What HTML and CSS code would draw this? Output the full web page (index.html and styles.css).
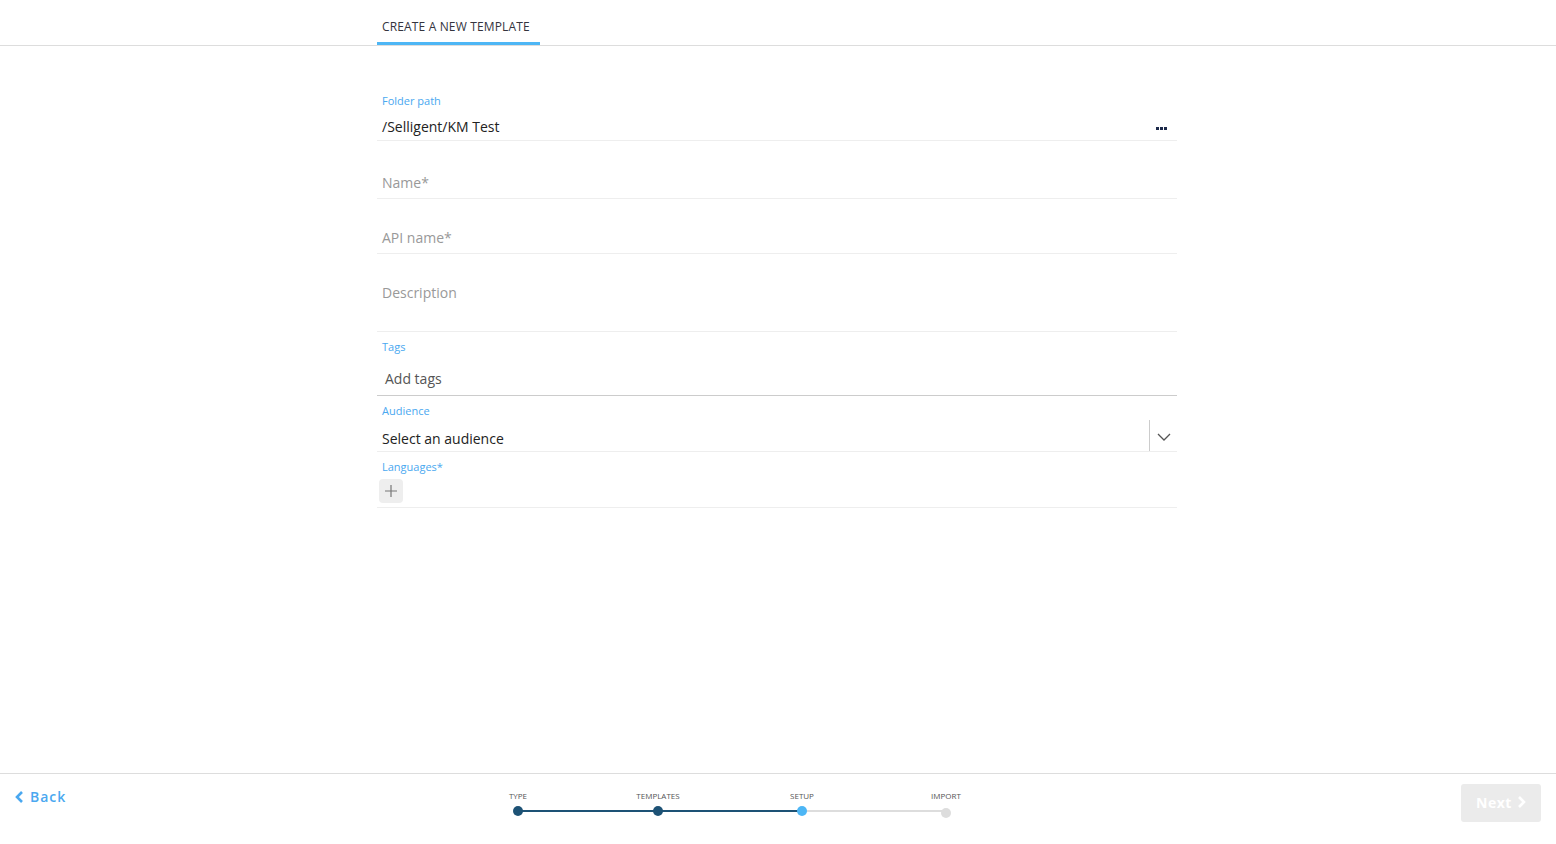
FILE: index.html
```html
<!DOCTYPE html>
<html lang="en">
<head>
    <meta charset="UTF-8">
    <title>Create a new template</title>
    <link rel="stylesheet" href="styles.css">
</head>
<body>
    <header class="top-bar">
        <div class="top-inner">
            <div class="tab active">CREATE A NEW TEMPLATE</div>
        </div>
    </header>

    <main class="content">
        <form class="template-form">
            <div class="field folder-field">
                <label class="field-label">Folder path</label>
                <div class="field-row">
                    <span class="field-value">/Selligent/KM Test</span>
                    <svg class="more-icon" width="11" height="3" viewBox="0 0 11 3"><rect x="0" y="0" width="3" height="3" fill="#1d2a4a"/><rect x="4" y="0" width="3" height="3" fill="#1d2a4a"/><rect x="8" y="0" width="3" height="3" fill="#1d2a4a"/></svg>
                </div>
            </div>

            <div class="field name-field">
                <span class="placeholder">Name*</span>
            </div>

            <div class="field api-field">
                <span class="placeholder">API name*</span>
            </div>

            <div class="field desc-field">
                <span class="placeholder">Description</span>
            </div>

            <div class="field tags-field">
                <label class="field-label">Tags</label>
                <span class="tags-input">Add tags</span>
            </div>

            <div class="field audience-field">
                <label class="field-label">Audience</label>
                <div class="select-row">
                    <span class="field-value">Select an audience</span>
                    <span class="select-toggle">
                        <svg width="14" height="8" viewBox="0 0 14 8"><path d="M1 1 L7 7 L13 1" fill="none" stroke="#555" stroke-width="1.3"/></svg>
                    </span>
                </div>
            </div>

            <div class="field lang-field">
                <label class="field-label">Languages*</label>
                <button type="button" class="add-button">
                    <svg width="12" height="12" viewBox="0 0 12 12"><path d="M6 0 V12 M0 6 H12" stroke="#777" stroke-width="1.2"/></svg>
                </button>
            </div>
        </form>
    </main>

    <footer class="wizard-footer">
        <a class="back-link" href="#">
            <svg width="9" height="12" viewBox="0 0 9 12"><path d="M7 1 L2 6 L7 11" fill="none" stroke="#4aa8f0" stroke-width="2.6"/></svg>
            Back
        </a>

        <div class="stepper">
            <div class="step done">
                <span class="step-label">TYPE</span>
                <span class="step-dot"></span>
            </div>
            <div class="step done">
                <span class="step-label">TEMPLATES</span>
                <span class="step-dot"></span>
            </div>
            <div class="step current">
                <span class="step-label">SETUP</span>
                <span class="step-dot"></span>
            </div>
            <div class="step todo">
                <span class="step-label">IMPORT</span>
                <span class="step-dot"></span>
            </div>
        </div>

        <button class="next-button" disabled>
            Next
            <svg width="9" height="12" viewBox="0 0 9 12"><path d="M2 1 L7 6 L2 11" fill="none" stroke="#fff" stroke-width="2.6"/></svg>
        </button>
    </footer>
</body>
</html>
```

FILE: styles.css
```css
* {
    margin: 0;
    padding: 0;
    box-sizing: border-box;
}

html, body {
    height: 100%;
}

body {
    display: flex;
    flex-direction: column;
    min-height: 100vh;
    background-color: #fff;
    font-family: "Open Sans", Arial, sans-serif;
    color: #333;
}

/* Header with tab */
.top-bar {
    border-bottom: 1px solid #ddd;
    height: 46px;
}

.top-inner {
    width: 800px;
    margin-left: calc(50% - 401px);
    display: flex;
}

.tab {
    padding: 19px 10px 7px 5px;
    font-size: 12px;
    line-height: 16px;
    letter-spacing: 0.15px;
    color: #34343e;
    border-bottom: 3px solid transparent;
}

.tab.active {
    border-bottom-color: #4db6f5;
}

/* Form */
.content {
    flex: 1;
}

.template-form {
    width: 800px;
    margin-left: calc(50% - 401px);
    padding-top: 40px;
}

.field {
    border-bottom: 1px solid #eee;
    padding-left: 5px;
}

.field-label {
    display: block;
    font-size: 11px;
    line-height: 14px;
    color: #4aa8f0;
}

.field-value {
    font-size: 14px;
    line-height: 20px;
    color: #222;
}

.placeholder {
    display: block;
    font-size: 14px;
    line-height: 20px;
    color: #999;
}

.folder-field {
    padding-top: 8px;
    padding-bottom: 3px;
}

.field-row {
    display: flex;
    justify-content: space-between;
    align-items: center;
    margin-top: 9px;
    padding-right: 10px;
}

.more-icon {
    display: block;
    margin-top: 2px;
}

.name-field {
    padding-top: 32px;
    padding-bottom: 5px;
}

.api-field {
    padding-top: 29px;
    padding-bottom: 5px;
}

.desc-field {
    padding-top: 29px;
    padding-bottom: 28px;
}

.tags-field {
    padding-top: 8px;
    padding-bottom: 6px;
    border-bottom-color: #ccc;
}

.tags-input {
    display: block;
    margin-top: 15px;
    padding-left: 3px;
    font-size: 14px;
    line-height: 20px;
    color: #555;
}

.audience-field {
    padding-top: 8px;
}

.select-row {
    display: flex;
    justify-content: space-between;
    align-items: flex-end;
    margin-top: 2px;
}

.select-row .field-value {
    padding-bottom: 2px;
}

.select-toggle {
    display: flex;
    align-items: center;
    justify-content: center;
    width: 28px;
    height: 31px;
    border-left: 1px solid #ccc;
    padding-top: 2px;
}

.lang-field {
    padding-top: 8px;
    padding-bottom: 4px;
    padding-left: 2px;
}

.lang-field .field-label {
    padding-left: 3px;
}

.add-button {
    display: flex;
    align-items: center;
    justify-content: center;
    width: 24px;
    height: 24px;
    margin-top: 5px;
    border: none;
    border-radius: 4px;
    background-color: #eee;
    cursor: pointer;
}

/* Footer / wizard */
.wizard-footer {
    display: grid;
    grid-template-columns: 433px 568px 1fr;
    align-items: start;
    height: 71px;
    border-top: 1px solid #ddd;
    padding: 0 15px;
}

.back-link {
    display: flex;
    align-items: center;
    gap: 6px;
    margin-top: 13px;
    font-size: 14px;
    line-height: 20px;
    font-weight: 600;
    letter-spacing: 1px;
    color: #4aa8f0;
    text-decoration: none;
}

.stepper {
    display: grid;
    grid-template-columns: 140px 140px 148px 140px;
    padding-top: 17px;
}

.step {
    position: relative;
    display: flex;
    flex-direction: column;
    align-items: center;
}

.step-label {
    font-size: 8px;
    line-height: 10px;
    color: #555;
}

.step-dot {
    position: relative;
    z-index: 1;
    width: 10px;
    height: 10px;
    margin-top: 5px;
    border-radius: 50%;
    background-color: #1d5275;
}

.step::after {
    content: "";
    position: absolute;
    left: 50%;
    width: 144px;
    top: 19px;
    height: 2px;
    background-color: #ddd;
}

.step:first-child::after {
    width: 140px;
}

.step.done::after {
    background-color: #1d5275;
}

.step.todo::after {
    display: none;
}

.step.current .step-dot {
    background-color: #4db6f5;
}

.step.todo .step-dot {
    background-color: #ddd;
    margin-top: 7px;
}

.next-button {
    justify-self: end;
    display: flex;
    align-items: center;
    justify-content: center;
    gap: 5px;
    width: 80px;
    height: 38px;
    margin-top: 10px;
    padding-bottom: 2px;
    border: none;
    border-radius: 3px;
    background-color: #ebebeb;
    color: #fff;
    font-family: "Open Sans", Arial, sans-serif;
    font-size: 14px;
    font-weight: 700;
    letter-spacing: 0.5px;
}
```
